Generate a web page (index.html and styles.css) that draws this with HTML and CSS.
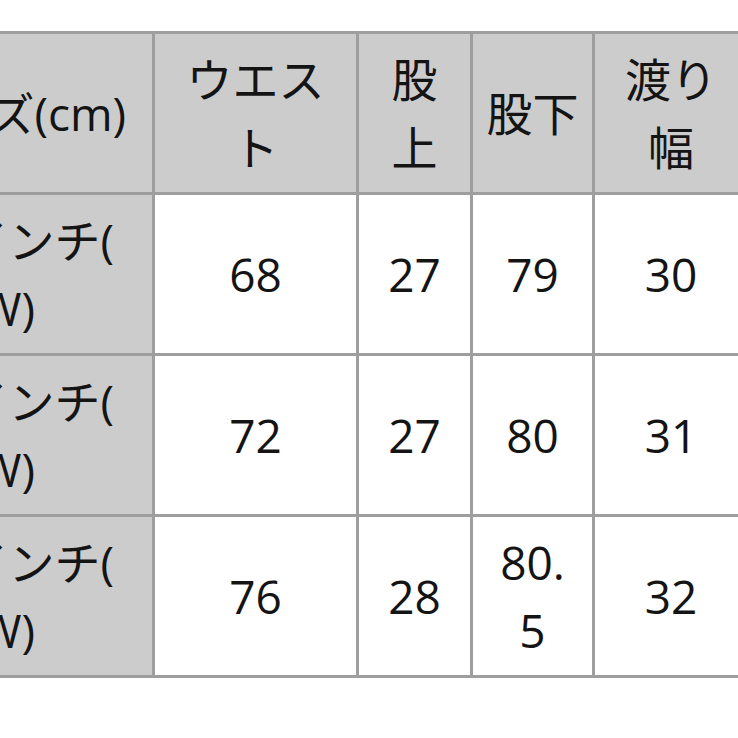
FILE: index.html
```html
<!DOCTYPE html>
<html lang="ja">
<head>
<meta charset="utf-8">
<title>サイズ表</title>
<link rel="stylesheet" href="styles.css">
</head>
<body>
<table class="size-table">
  <colgroup>
    <col class="c-size">
    <col class="c-waist">
    <col class="c-rise">
    <col class="c-inseam">
    <col class="c-thigh">
  </colgroup>
  <thead>
    <tr>
      <th>サイズ(cm)</th>
      <th>ウエス<br>ト</th>
      <th>股<br>上</th>
      <th>股下</th>
      <th>渡り<br>幅</th>
    </tr>
  </thead>
  <tbody>
    <tr>
      <th>27インチ(<br><span class="tail">W)</span></th>
      <td>68</td>
      <td>27</td>
      <td>79</td>
      <td>30</td>
    </tr>
    <tr>
      <th>28インチ(<br><span class="tail">W)</span></th>
      <td>72</td>
      <td>27</td>
      <td>80</td>
      <td>31</td>
    </tr>
    <tr>
      <th>30インチ(<br><span class="tail">W)</span></th>
      <td>76</td>
      <td>28</td>
      <td>80.<br>5</td>
      <td>32</td>
    </tr>
  </tbody>
</table>
</body>
</html>
```

FILE: styles.css
```css
html, body {
  margin: 0;
  padding: 0;
  background: #ffffff;
  overflow: hidden;
}

body {
  width: 738px;
  height: 738px;
}

.size-table {
  border-collapse: collapse;
  table-layout: fixed;
  width: 878px;
  margin-top: 31px;
  margin-left: -131px;
  font-family: "Open Sans", "Noto Sans CJK JP", sans-serif;
  font-size: 46px;
  line-height: 68px;
  color: #141414;
}

.c-size { width: 283px; }
.c-waist { width: 204px; }
.c-rise { width: 114px; }
.c-inseam { width: 122px; }
.c-thigh { width: 155px; }

.size-table th,
.size-table td {
  border: 3px solid #9e9e9e;
  height: 158px;
  padding: 0;
  text-align: center;
  vertical-align: middle;
  font-weight: normal;
}

.size-table th {
  background: #cccccc;
}

.size-table td {
  background: #ffffff;
}

.tail {
  margin-right: 10px;
}
```
